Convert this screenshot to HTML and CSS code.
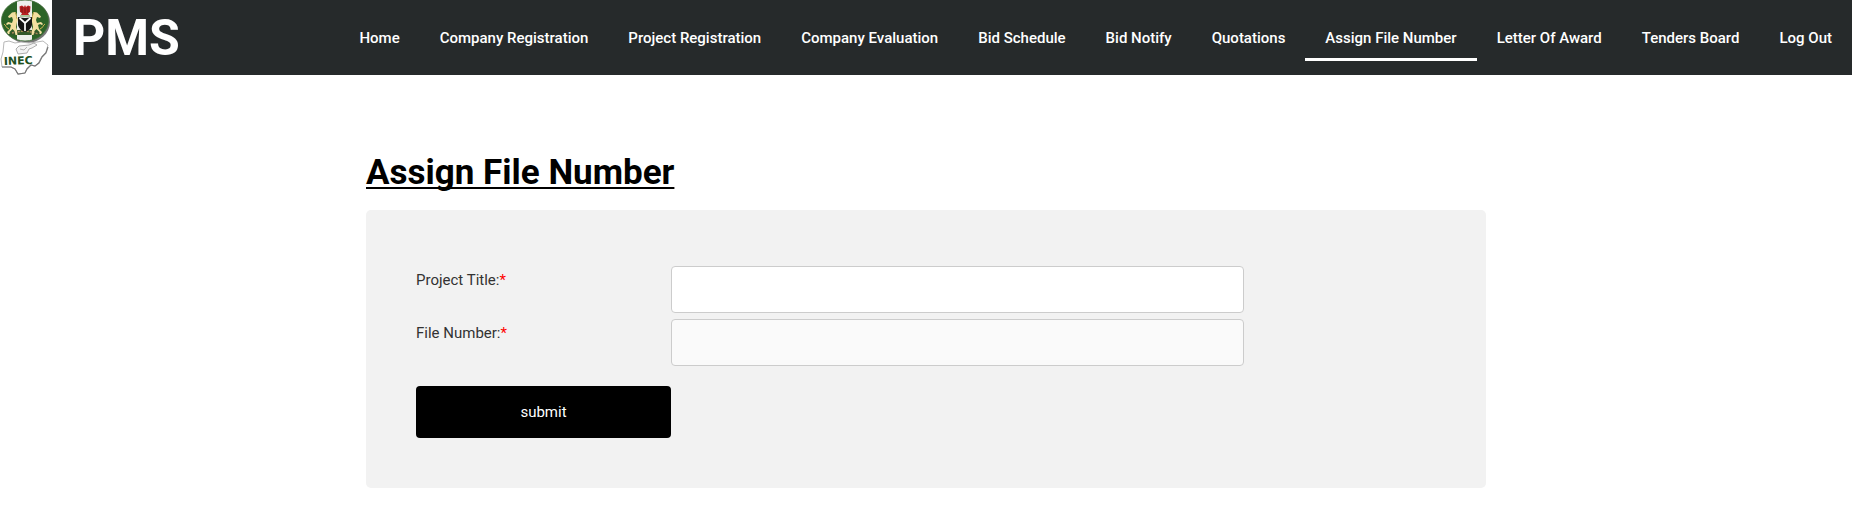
FILE: index.html
```
<!DOCTYPE html>
<html lang="en">
<head>
<meta charset="utf-8">
<title>PMS - Assign File Number</title>
<link rel="stylesheet" href="styles.css">
</head>
<body>
<header class="site-header">
  <svg class="logo" viewBox="0 0 52 75" role="img" aria-label="INEC">
    <defs>
      <clipPath id="seal"><ellipse cx="25" cy="20.500" rx="23.500" ry="20.500"/></clipPath>
      <g id="horse">
        <path fill="#f3dfa0" d="M15 12l-3 .5-4 4 1 1.500 3-1 1 3-1 3-4-1-2 2 1 1 2-1 2 1-1 4-3 3 1 2h1.500l0-2 3-3 2 2 1 4h2l-.500-5-1-3 1-5 1.500-3-2-1-.500-3z"/>
        <path fill="none" stroke="#d7b654" stroke-width="1" d="M15 12c2 2 1 5 2 7M9 29c-3-1-3-4-5-5"/>
      </g>
    </defs>
    <rect width="52" height="75" fill="#fff"/>
    <ellipse cx="26.500" cy="22" rx="23.500" ry="21" fill="#777"/>
    <g clip-path="url(#seal)">
      <rect width="52" height="43" fill="#2c6427"/>
      <rect x="17" width="15" height="43" fill="#eef0ec"/>
      <path d="M11 31q14-3 28 0l2 4H9z" fill="#34592a"/>
      <path d="M12 33q13-4 26 1" fill="none" stroke="#a98a58" stroke-width="1.500" stroke-dasharray="2 1"/>
    </g>
    <use href="#horse"/>
    <use href="#horse" transform="matrix(-1 0 0 1 49 0)"/>
    <path d="M18 17q7 2 14 0v8q-1 5-7 7-6-2-7-7z" fill="#151515"/>
    <path d="M19.500 18l5.500 5 5.500-5M25 23v8" fill="none" stroke="#fff" stroke-width="1.700"/>
    <path d="M25 5l1 2 2-1.500 2.500 1-.500 5.500-2 1 1 2h-8l1-2-2-1-.500-5.500 2.500-1 2 1.500z" fill="#b82020"/>
    <path d="M22 7v6M28 7v6M25 8v5" stroke="#5c1515" stroke-width=".7"/>
    <path d="M20 16h10" stroke="#6a974b"/>
    <ellipse cx="25" cy="20.500" rx="23.500" ry="20.500" fill="none" stroke="#416f3a" stroke-width=".8"/>
    <path d="M4 42l5-1 6 2 6-1 8 1 8-1 6-1 5 4-2 7-4 4-3 6-4 4-4-1-4 3-2 5-7 1-3-5-4-2H2l-1-8 2-7z" fill="#fff" stroke="#b8b8b8" stroke-width="1"/>
    <path d="M48 47l-2 6-4 4-3 6-4 3-4-1-4 4-2 4-7 1-3-5-4-2H2" fill="none" stroke="#777" stroke-width="1.200"/>
    <path d="M16 49l3-3 10-1 5-2 3 2-5 3-3 1-2 4-9 1z" fill="#f4f4f4" stroke="#999" stroke-width=".8"/>
    <path d="M20 49l4 1 3-3" fill="none" stroke="#999" stroke-width=".7"/>
    <text class="logo-text" x="4" y="65" transform="rotate(-2 4 65)">INEC</text>
  </svg>
  <div class="brand">PMS</div>
  <nav class="menu" aria-label="Main">
    <a href="#">Home</a>
    <a href="#">Company Registration</a>
    <a href="#">Project Registration</a>
    <a href="#">Company Evaluation</a>
    <a href="#">Bid Schedule</a>
    <a href="#">Bid Notify</a>
    <a href="#">Quotations</a>
    <a href="#" class="active" aria-current="page">Assign File Number</a>
    <a href="#">Letter Of Award</a>
    <a href="#">Tenders Board</a>
    <a href="#">Log Out</a>
  </nav>
</header>
<main class="content">
  <h1 class="title">Assign File Number</h1>
  <form class="panel">
    <div class="row">
      <label for="project">Project Title:<span class="required">*</span></label>
      <input class="field" id="project" type="text" required>
    </div>
    <div class="row">
      <label for="file">File Number:<span class="required">*</span></label>
      <input class="field readonly" id="file" type="text" readonly>
    </div>
    <button class="submit" type="submit">submit</button>
  </form>
</main>
</body>
</html>
```
FILE: styles.css
```
* {
  box-sizing: border-box;
}

body {
  margin: 0;
  background: #fff;
  font-family: Roboto, sans-serif;
  font-size: 15px;
  color: #333;
}

.site-header {
  display: flex;
  align-items: center;
  background: #262a2b;
}

.logo {
  display: block;
  flex: none;
  width: 52px;
  height: 75px;
}

.logo-text {
  font-family: "DejaVu Sans", sans-serif;
  font-size: 11px;
  font-weight: 700;
  fill: #205020;
}

.brand {
  margin-left: 21px;
  font-size: 50px;
  line-height: 60px;
  font-weight: 700;
  color: #fff;
}

.menu {
  display: flex;
  margin-left: auto;
}

.menu a {
  padding: 10px 20px;
  border-bottom: 3px solid transparent;
  border-top: 3px solid transparent;
  font-weight: 500;
  line-height: 20px;
  color: #fff;
  text-decoration: none;
  white-space: nowrap;
}

.menu .active {
  border-bottom-color: #fff;
}

.content {
  max-width: 1120px;
  margin: 0 auto;
  padding: 75px 0 40px;
}

.title {
  margin: 0 0 14px;
  font-size: 35px;
  line-height: 46px;
  font-weight: 700;
  color: #000;
  text-decoration: underline;
  text-decoration-thickness: 2px;
  text-decoration-skip-ink: none;
  text-underline-offset: 3px;
}

.panel {
  padding: 56px 50px 50px;
  border-radius: 5px;
  background: #f2f2f2;
}

.row {
  display: flex;
  align-items: flex-start;
  margin-bottom: 6px;
}

.row label {
  width: 25%;
  padding-top: 4px;
  line-height: 20px;
}

.required {
  color: #f00;
}

.field {
  width: 56.2%;
  height: 47px;
  padding: 12px;
  border: 1px solid #ccc;
  border-radius: 4px;
  background: #fff;
  font: inherit;
}

.readonly {
  background: #fafafa;
}

.submit {
  display: block;
  width: 25%;
  margin-top: 20px;
  padding: 16px 20px;
  border: 0;
  border-radius: 4px;
  background: #000;
  font: inherit;
  line-height: 20px;
  color: #fff;
  cursor: pointer;
}
```
